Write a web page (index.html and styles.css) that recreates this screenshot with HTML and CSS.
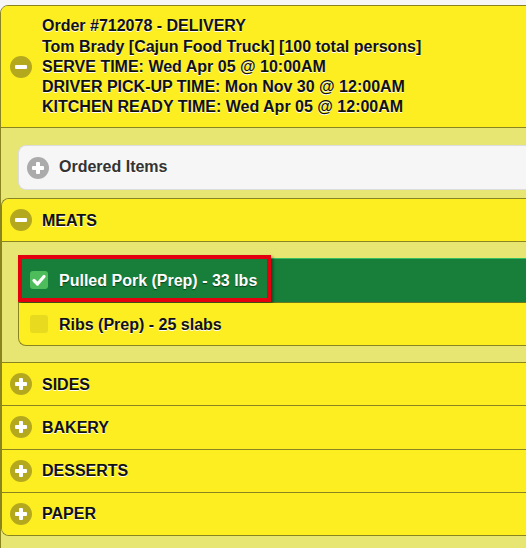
FILE: index.html
```html
<!DOCTYPE html>
<html>
<head>
<meta charset="utf-8">
<link rel="stylesheet" href="styles.css">
</head>
<body>
<div class="page">
  <div class="order">
    <div class="order-head">
      <svg class="icon" viewBox="0 0 22 22"><circle cx="11" cy="11" r="11"/><rect x="5" y="9" width="12" height="4" rx="1" fill="#fff"/></svg>
      <div class="order-lines">
        <div>Order #712078 - DELIVERY</div>
        <div>Tom Brady [Cajun Food Truck] [100 total persons]</div>
        <div>SERVE TIME: Wed Apr 05 @ 10:00AM</div>
        <div>DRIVER PICK-UP TIME: Mon Nov 30 @ 12:00AM</div>
        <div>KITCHEN READY TIME: Wed Apr 05 @ 12:00AM</div>
      </div>
    </div>
    <div class="order-body">
      <div class="ordered">
        <svg class="icon icon-grey" viewBox="0 0 22 22"><circle cx="11" cy="11" r="11"/><rect x="5" y="9" width="12" height="4" rx="1" fill="#fff"/><rect x="9" y="5" width="4" height="12" rx="1" fill="#fff"/></svg>
        <span>Ordered Items</span>
      </div>
      <div class="cats">
        <div class="cat open">
          <div class="cat-head">
            <svg class="icon" viewBox="0 0 22 22"><circle cx="11" cy="11" r="11"/><rect x="5" y="9" width="12" height="4" rx="1" fill="#fff"/></svg>
            <span>MEATS</span>
          </div>
          <div class="cat-body">
            <ul class="items">
              <li class="item checked">
                <span class="cb"><svg viewBox="0 0 18 18"><path d="M4 9.5 L7.5 13 L14 5.5" fill="none" stroke="#fff" stroke-width="3.2" stroke-linecap="round" stroke-linejoin="round"/></svg></span>
                <span>Pulled Pork (Prep) - 33 lbs</span>
                <span class="highlight"></span>
              </li>
              <li class="item">
                <span class="cb"></span>
                <span>Ribs (Prep) - 25 slabs</span>
              </li>
            </ul>
          </div>
        </div>
        <div class="cat">
          <div class="cat-head">
            <svg class="icon" viewBox="0 0 22 22"><circle cx="11" cy="11" r="11"/><rect x="5" y="9" width="12" height="4" rx="1" fill="#fff"/><rect x="9" y="5" width="4" height="12" rx="1" fill="#fff"/></svg>
            <span>SIDES</span>
          </div>
        </div>
        <div class="cat">
          <div class="cat-head">
            <svg class="icon" viewBox="0 0 22 22"><circle cx="11" cy="11" r="11"/><rect x="5" y="9" width="12" height="4" rx="1" fill="#fff"/><rect x="9" y="5" width="4" height="12" rx="1" fill="#fff"/></svg>
            <span>BAKERY</span>
          </div>
        </div>
        <div class="cat">
          <div class="cat-head">
            <svg class="icon" viewBox="0 0 22 22"><circle cx="11" cy="11" r="11"/><rect x="5" y="9" width="12" height="4" rx="1" fill="#fff"/><rect x="9" y="5" width="4" height="12" rx="1" fill="#fff"/></svg>
            <span>DESSERTS</span>
          </div>
        </div>
        <div class="cat">
          <div class="cat-head">
            <svg class="icon" viewBox="0 0 22 22"><circle cx="11" cy="11" r="11"/><rect x="5" y="9" width="12" height="4" rx="1" fill="#fff"/><rect x="9" y="5" width="4" height="12" rx="1" fill="#fff"/></svg>
            <span>PAPER</span>
          </div>
        </div>
      </div>
    </div>
  </div>
</div>
</body>
</html>
```
FILE: styles.css
```css
* { box-sizing: border-box; }
html, body {
  margin: 0;
  padding: 0;
  background: #f6f6f6;
  overflow: hidden;
}
body {
  font-family: "Liberation Sans", Arial, sans-serif;
  font-size: 16px;
  font-weight: bold;
  color: #111;
}
.page {
  padding-top: 5px;
}
.order {
  width: 580px;
  min-height: 600px;
  border: 1px solid #8a8420;
  border-radius: 8px 8px 0 0;
  background: #e8e673;
}
.icon {
  width: 22px;
  height: 22px;
  flex: none;
  fill: #b4a91e;
  display: block;
}
.icon-grey { fill: #ababab; }
.order-head {
  display: flex;
  align-items: center;
  gap: 10px;
  height: 122px;
  padding: 0 0 0 9px;
  background: #fdee22;
  border-bottom: 1px solid #8a8420;
  border-radius: 7px 7px 0 0;
  line-height: 20.2px;
  text-shadow: 0 1px 0 #fff;
}
.order-lines {
  padding-top: 1px;
}
.order-body {
  padding: 17px 0 13px 0;
}
.ordered {
  margin-left: 17px;
  height: 45px;
  background: #f6f6f6;
  border: 1px solid #dcdcdc;
  border-right: none;
  border-radius: 8px 0 0 8px;
  display: flex;
  align-items: center;
  gap: 10px;
  padding: 0 0 0 8px;
  line-height: 21px;
  color: #333;
  text-shadow: 0 1px 0 #fff;
}
.ordered span {
  padding-bottom: 2px;
}
.cats {
  margin-top: 8px;
  border: 1px solid #8a8420;
  border-right: none;
  border-radius: 8px 0 0 8px;
  overflow: hidden;
}
.cat-head {
  display: flex;
  align-items: center;
  gap: 10px;
  height: 43.25px;
  padding: 0 0 0 8px;
  line-height: 21px;
  background: #fdee22;
  text-shadow: 0 1px 0 #fff;
}
.cat + .cat .cat-head {
  border-top: 1px solid #8a8420;
}
.cat.open .cat-head {
  height: 43px;
  border-bottom: 1px solid #8a8420;
}
.cat-body {
  padding: 16px 0 16px 16px;
  background: #e8e673;
}
.items {
  list-style: none;
  margin: 0;
  padding: 0;
}
.item {
  position: relative;
  display: flex;
  align-items: center;
  gap: 11px;
  height: 43px;
  padding: 0 0 0 11px;
  line-height: 21px;
  background: #fdee22;
  border-left: 1px solid #8a8420;
  border-bottom: 1px solid #8a8420;
  text-shadow: 0 1px 0 #fff;
}
.item:last-child {
  border-bottom-left-radius: 8px;
}
.item.checked {
  height: 45px;
  background: #177f3a;
  color: #fff;
  border-top: 1px solid #33c060;
  border-bottom-color: #6a7a1e;
  padding-bottom: 1px;
  text-shadow: 0 1px 1px rgba(0, 0, 0, 0.5);
}
.cb {
  width: 18px;
  height: 18px;
  flex: none;
  border-radius: 3px;
  background: #e8da1e;
  display: block;
}
.cb svg {
  width: 18px;
  height: 18px;
  display: block;
}
.item.checked .cb {
  background: #4dbd5c;
}
.highlight {
  position: absolute;
  top: -4px;
  left: -1px;
  width: 253px;
  height: 47px;
  border: 4px solid #e3000f;
  box-shadow: 2px 2px 3px rgba(0, 0, 0, 0.45);
  pointer-events: none;
}
```
